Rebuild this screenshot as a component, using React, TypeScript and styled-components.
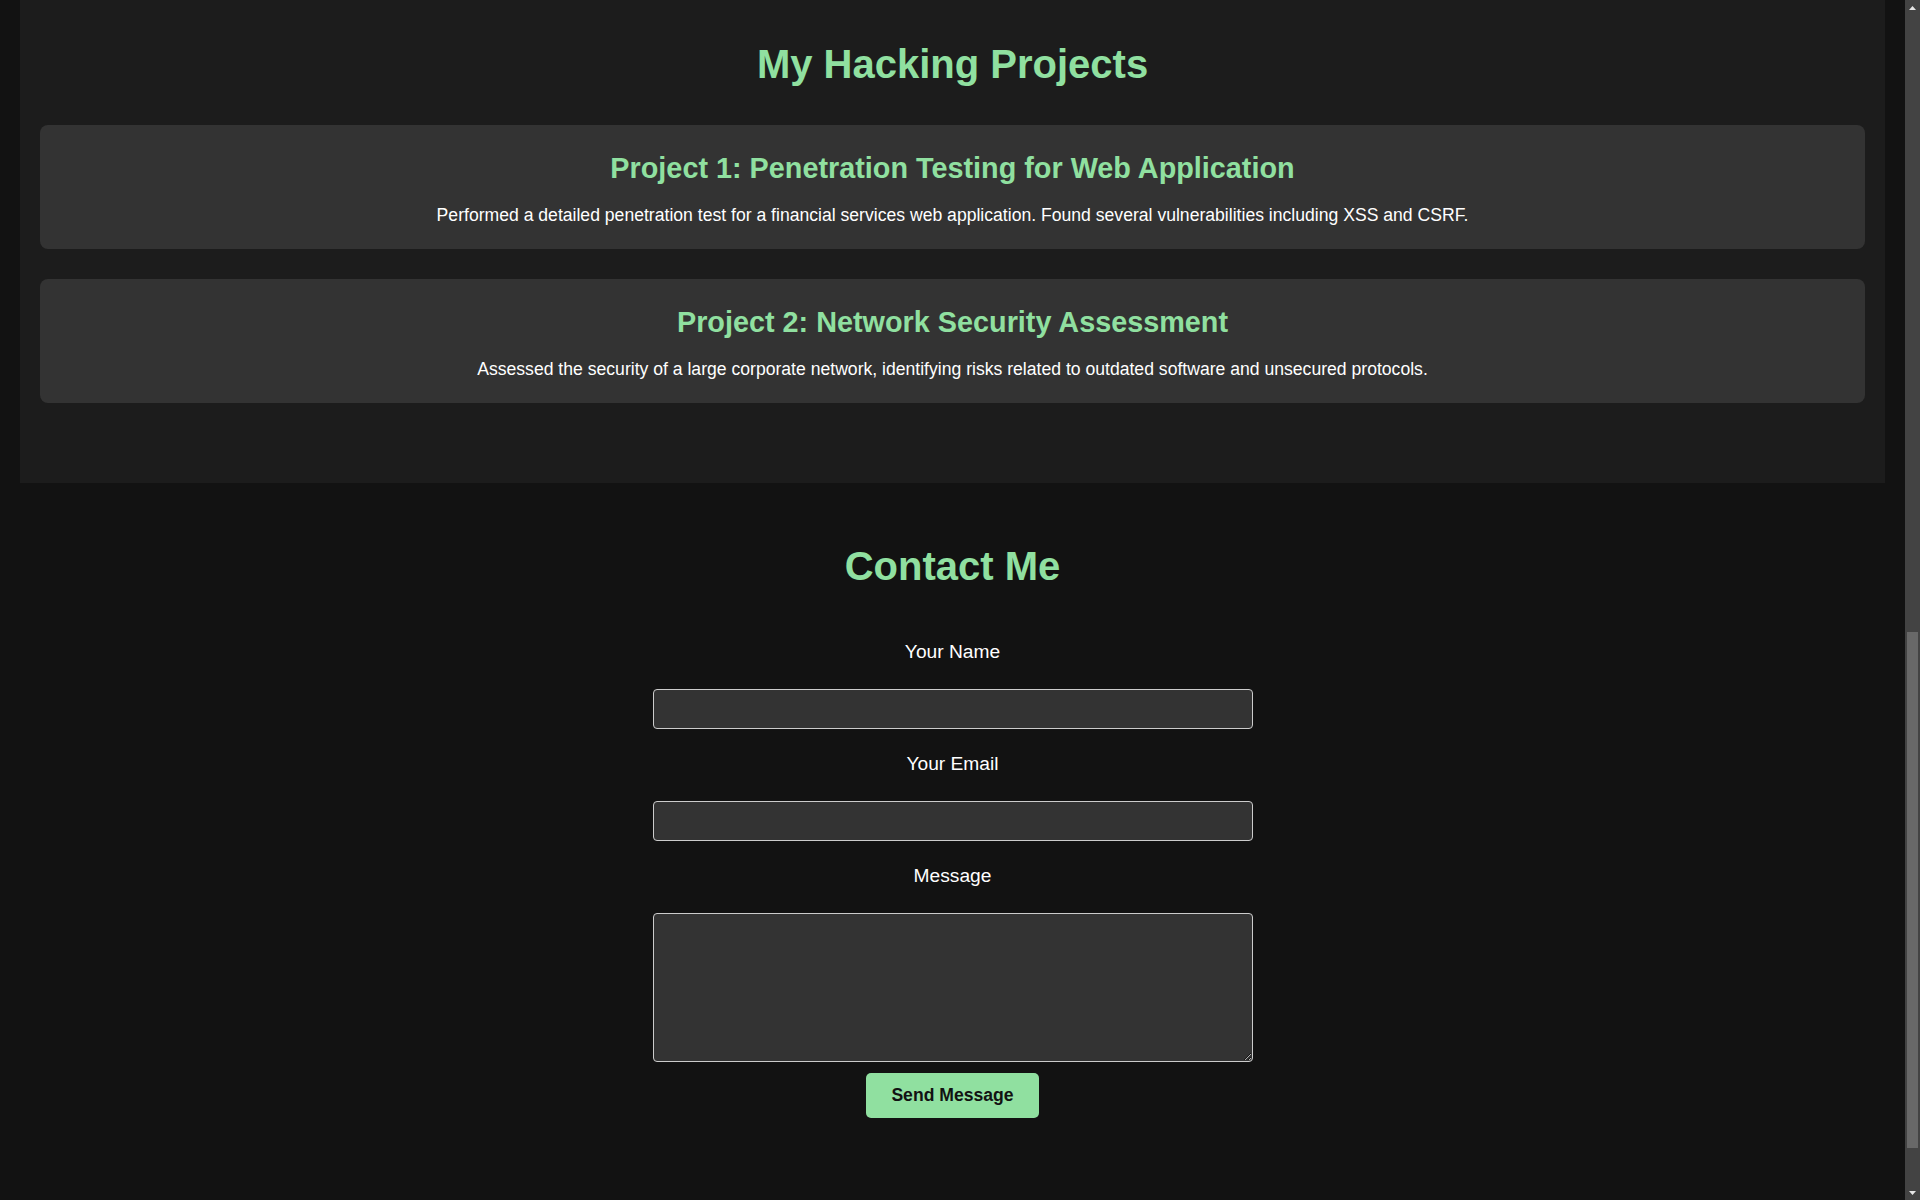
import React from "react";
import styled, { createGlobalStyle } from "styled-components";

const GREEN = "#90e0a0";

const GlobalStyle = createGlobalStyle`
  html {
    color-scheme: dark;
  }
  body {
    margin: 0;
    background: #121212;
    color: #ffffff;
    font-family: "Liberation Sans", Arial, Helvetica, sans-serif;
  }
  * {
    box-sizing: border-box;
  }
`;

const Page = styled.main`
  min-height: 100vh;
  margin-right: 15px;
  background: #121212;
`;

const ProjectsSection = styled.section`
  margin: 0 20px;
  padding: 42px 20px 80px;
  background: #1c1c1c;
`;

const SectionTitle = styled.h2<{ $gap: number }>`
  margin: 0 0 ${(p) => p.$gap}px;
  font-size: 40px;
  font-weight: 700;
  color: ${GREEN};
  text-align: center;
`;

const ProjectList = styled.div`
  display: flex;
  flex-direction: column;
  gap: 30px;
`;

const ProjectCard = styled.article`
  background: #333333;
  border-radius: 8px;
  padding: 27px 20px 23px;
  text-align: center;
`;

const ProjectTitle = styled.h3`
  margin: 0 0 20px;
  font-size: 28.8px;
  font-weight: 700;
  color: ${GREEN};
`;

const ProjectText = styled.p`
  margin: 0;
  font-size: 17.6px;
  color: #ffffff;
`;

const ContactSection = styled.section`
  padding: 61px 20px 82px;
`;

const Form = styled.form`
  width: 600px;
  margin: 0 auto;
  display: flex;
  flex-direction: column;
  align-items: stretch;
`;

const Label = styled.label`
  display: block;
  margin: 0 0 26px;
  font-size: 19.2px;
  text-align: center;
  color: #ffffff;
`;

const fieldBase = `
  display: block;
  width: 100%;
  background: #333333;
  border: 1px solid #cccccc;
  border-radius: 4px;
  color: #ffffff;
  font-family: "Liberation Sans", Arial, sans-serif;
  font-size: 16px;
  padding: 10px;
  outline: none;
`;

const Input = styled.input`
  ${fieldBase}
  height: 40px;
  margin: 0 0 24px;
`;

const TextArea = styled.textarea`
  ${fieldBase}
  height: 149px;
  margin: 0 0 11px;
  resize: vertical;
`;

const SubmitButton = styled.button`
  align-self: center;
  background: ${GREEN};
  color: #121212;
  border: none;
  border-radius: 5px;
  padding: 12px 25px;
  font-family: "Liberation Sans", Arial, sans-serif;
  font-size: 17.6px;
  font-weight: 700;
  cursor: pointer;
`;

/* Browser scrollbar, drawn over the right edge of the viewport */
const ScrollTrack = styled.div`
  position: fixed;
  top: 0;
  right: 0;
  width: 15px;
  height: 100vh;
  background: #434343;
  display: flex;
  flex-direction: column;
  align-items: center;
`;

const ScrollArrow = styled.div`
  width: 15px;
  height: 15px;
  display: flex;
  align-items: center;
  justify-content: center;
  color: #e6e6e6;
`;

const ScrollSpace = styled.div`
  flex: 1;
  width: 100%;
  display: flex;
  flex-direction: column;
  align-items: center;
`;

const ScrollThumb = styled.div`
  width: 11px;
  background: #686868;
`;

const Arrow = ({ up }: { up: boolean }) => (
  <svg width="7" height="4" viewBox="0 0 7 4" aria-hidden="true">
    <path d={up ? "M0 4 L3.5 0 L7 4 Z" : "M0 0 L3.5 4 L7 0 Z"} fill="currentColor" />
  </svg>
);

const projects = [
  {
    title: "Project 1: Penetration Testing for Web Application",
    text:
      "Performed a detailed penetration test for a financial services web application. Found several vulnerabilities including XSS and CSRF.",
  },
  {
    title: "Project 2: Network Security Assessment",
    text:
      "Assessed the security of a large corporate network, identifying risks related to outdated software and unsecured protocols.",
  },
];

export default function App() {
  return (
    <Page>
      <GlobalStyle />
      <ProjectsSection>
        <SectionTitle $gap={38}>My Hacking Projects</SectionTitle>
        <ProjectList>
          {projects.map((p) => (
            <ProjectCard key={p.title}>
              <ProjectTitle>{p.title}</ProjectTitle>
              <ProjectText>{p.text}</ProjectText>
            </ProjectCard>
          ))}
        </ProjectList>
      </ProjectsSection>
      <ContactSection>
        <SectionTitle $gap={52}>Contact Me</SectionTitle>
        <Form onSubmit={(e) => e.preventDefault()}>
          <Label htmlFor="name">Your Name</Label>
          <Input id="name" type="text" />
          <Label htmlFor="email">Your Email</Label>
          <Input id="email" type="email" />
          <Label htmlFor="message">Message</Label>
          <TextArea id="message" />
          <SubmitButton type="submit">Send Message</SubmitButton>
        </Form>
      </ContactSection>
      <ScrollTrack aria-hidden="true">
        <ScrollArrow>
          <Arrow up />
        </ScrollArrow>
        <ScrollSpace>
          <div style={{ height: 617 }} />
          <ScrollThumb style={{ height: 516 }} />
        </ScrollSpace>
        <ScrollArrow>
          <Arrow up={false} />
        </ScrollArrow>
      </ScrollTrack>
    </Page>
  );
}
